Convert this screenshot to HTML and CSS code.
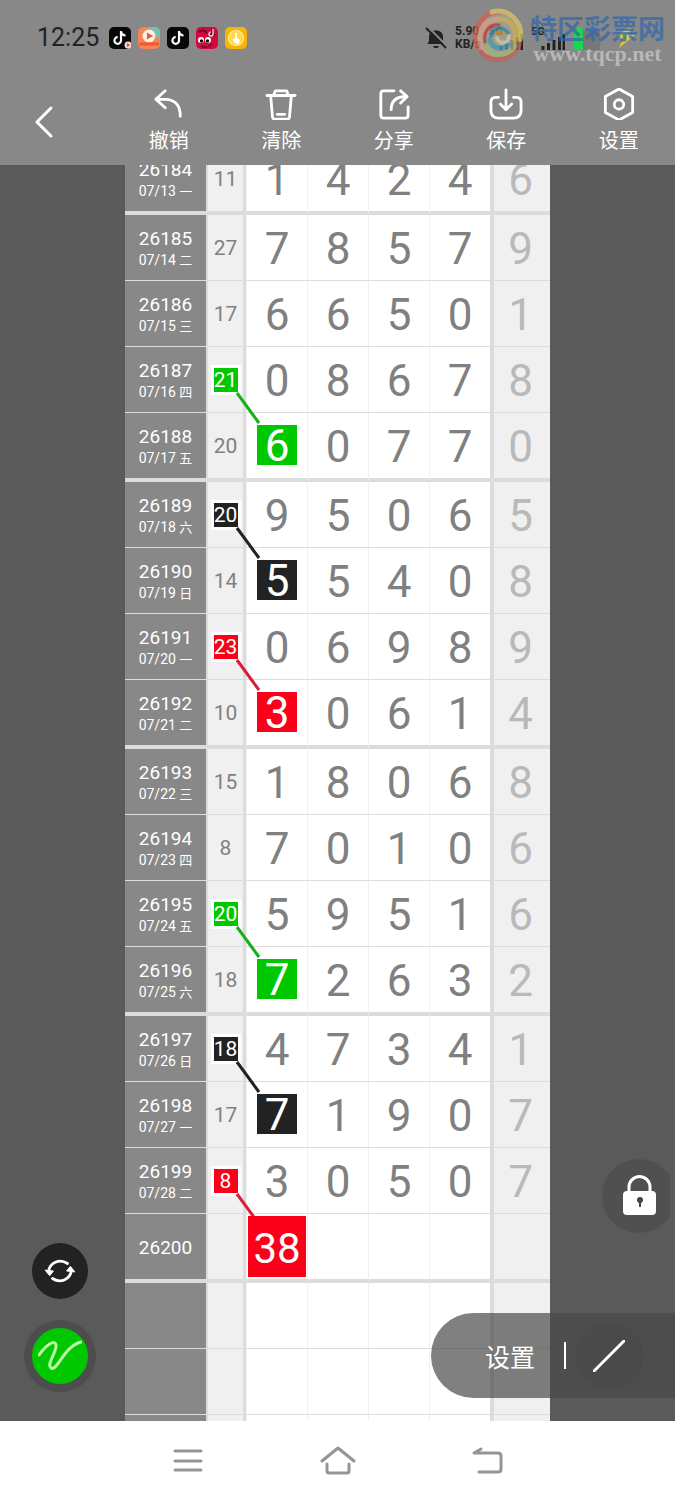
FILE: index.html
```html
<!DOCTYPE html>
<html lang="zh-CN">
<head>
    <meta charset="UTF-8">
    <meta name="viewport" content="width=device-width, initial-scale=1.0">
    <title>走势图</title>
    <link rel="stylesheet" href="styles.css">
</head>
<body>
    <header>
        <div class="status-bar">
            <span class="clock">12:25</span>
            <div class="app-icons">
                <svg viewBox="0 0 22 22"><rect width="22" height="22" rx="5" fill="#080808"/><path d="M12 4v9.500a3.300 3.300 0 1 1-3.300-3.300M12 4.500c.5 2.500 2 3.800 4.500 4" fill="none" stroke="#fff" stroke-width="2.200"/><circle cx="19" cy="18" r="3.500" fill="#f3d9cf"/><path d="M18 16l3 2-3 2z" fill="#e0442e"/></svg>
                <svg viewBox="0 0 22 22"><rect width="22" height="22" rx="5" fill="#f0865a"/><path d="M11 0h6a5 5 0 0 1 5 5v8z" fill="#6fc4ae"/><circle cx="11" cy="9" r="6.500" fill="#fbeee6"/><path d="M9 5.500l6 3.500-6 3.500z" fill="#ee5a30"/><path d="M1 17h20" stroke="#f9552b" stroke-width="3"/></svg>
                <svg viewBox="0 0 22 22"><rect width="22" height="22" rx="5" fill="#080808"/><path d="M12 4v9.500a3.300 3.300 0 1 1-3.300-3.300M12 4.500c.5 2.500 2 3.800 4.500 4" fill="none" stroke="#fff" stroke-width="2.200"/></svg>
                <svg viewBox="0 0 22 22"><rect width="22" height="22" rx="5" fill="#d3083f"/><path d="M3 5c3-2 6-2 8 1M16 2v5M13 8h6" fill="none" stroke="#5f0a24" stroke-width="2"/><path d="M17 2v5a2 2 0 1 1-2-2" fill="none" stroke="#fff" stroke-width="1.200"/><circle cx="5" cy="13" r="3" fill="#fff"/><circle cx="12" cy="13" r="3" fill="#fff"/><circle cx="5.500" cy="14" r="1.700" fill="#111"/><circle cx="11.500" cy="14" r="1.700" fill="#111"/><path d="M5 19c4 2 8 1 11-2" fill="none" stroke="#80092e" stroke-width="1.500"/></svg>
                <svg viewBox="0 0 22 22"><rect width="22" height="22" rx="5" fill="#f7b50c"/><circle cx="11" cy="11" r="7.500" fill="#ffd94a" stroke="#fff0a0" stroke-width="1.200"/><path d="M10 6v6l-2-1v3l3 3h3l1-4-3-2V6z" fill="#fff"/></svg>
            </div>
            <div class="system-icons">
                <svg class="bell" viewBox="0 0 22 22"><path d="M2 17c2-1.500 2-3 2-7 0-4 2.500-6.500 7-6.500S18 6 18 10c0 4 0 5.500 2 7z" fill="#222"/><path d="M8 19h6c-.5 3-5.500 3-6 0z" fill="#222"/><path d="M3 0l20 20" stroke="#888" stroke-width="2"/><path d="M1 1l20 20" stroke="#222" stroke-width="2"/></svg>
                <span class="speed">5.90<br>KB/s</span>
                <span class="signal">
                    <b>5G</b>
                    <svg viewBox="0 0 24 16"><path d="M2 12v4M7.500 9v7M13 6v10M18.500 3v13M23 0v16" stroke="#222" stroke-width="3"/></svg>
                </span>
                <span class="signal">
                    <b>5G</b>
                    <svg viewBox="0 0 24 16"><path d="M2 12v4M7.500 9v7M13 6v10M18.500 3v13M23 0v16" stroke="#222" stroke-width="3"/></svg>
                </span>
                <svg class="battery" viewBox="0 0 64 24"><path d="M1 4h3V1h4v3h2v20H1z" fill="#12dc4b"/><path d="M10 4h17v20H10z" fill="#777"/><path d="M54 2L43 12h7l-4 10 16-13h-8l5-7z" fill="#d8cb34"/></svg>
            </div>
            <div class="watermark">
                <svg viewBox="0 0 52 54">
                    <circle cx="26" cy="27" r="24" fill="#a7a48f"/>
                    <g fill="none" stroke-width="5" stroke-linecap="round">
                        <path d="M6 40C-2 22 10 4 27 4" stroke="#cf6552"/>
                        <path d="M14 46C2 34 8 12 26 11" stroke="#e1a38a"/>
                        <path d="M20 4C38-1 52 16 48 32" stroke="#dfc45f"/>
                        <path d="M28 11c12 0 18 12 14 22" stroke="#d6b455"/>
                        <path d="M47 36C40 54 18 56 9 44" stroke="#c56058"/>
                        <path d="M43 38C34 50 20 48 15 39" stroke="#a9bd72"/>
                        <path d="M13 34c-2-12 6-18 14-17" stroke="#c83c3a" stroke-width="3"/>
                        <path d="M36 37c-7 6-16 3-18-5" stroke="#4b9ebb"/>
                        <path d="M19 28c0-8 12-11 17-3" stroke="#3b91ad" stroke-width="4"/>
                        <path d="M37 28c0 8-10 9-12 2" stroke="#d5cfb0" stroke-width="4"/>
                        <path d="M24 27c1-5 8-4 7 1" stroke="#d79b2c" stroke-width="3"/>
                    </g>
                </svg>
                <p>
                    <strong>特区彩票网</strong>
                    <span>www.tqcp.net</span>
                </p>
            </div>
        </div>
        <nav class="toolbar">
            <button class="back" aria-label="返回"><svg viewBox="0 0 34 34"><path d="M24 3L10 17l14 14"/></svg></button>
            <button><svg viewBox="0 0 34 34"><path d="M13 3L3 12l10 9M4 12h9c10 0 16 6 16 18"/></svg>撤销</button>
            <button><svg viewBox="0 0 34 34"><path d="M2 8h30M9 8l2-5h12l2 5M6 8l2 23q.3 2 2.300 2h13.400q2 0 2.300-2l2-23M13 28h8"/></svg>清除</button>
            <button><svg viewBox="0 0 34 34"><path d="M17 3H6q-3 0-3 3v23q0 3 3 3h23q3 0 3-3v-9M14 23c0-9 5-14 16-14M24 3l7 6-7 7"/></svg>分享</button>
            <button><svg viewBox="0 0 34 34"><path d="M9 10H6q-5 0-5 5v9q0 8 8 8h16q8 0 8-8v-9q0-5-5-5h-3M17 2v20M11 17l6 6 6-6"/></svg>保存</button>
            <button><svg viewBox="0 0 34 34"><path d="M17 1l14.500 8v17L17 34 2.500 26V9z"/><circle cx="17" cy="17.500" r="5"/></svg>设置</button>
        </nav>
    </header>

    <main>
        <table class="chart">
            <colgroup>
                <col class="col-issue">
                <col class="col-sum">
                <col span="4">
                <col class="col-last">
            </colgroup>
            <tbody id="chart-body">
                <!-- Rows are added by the script -->
            </tbody>
        </table>

        <div class="tools">
            <button class="refresh-btn" aria-label="切换">
                <svg viewBox="0 0 32 26"><path d="M4 13C5 5 15-1 24 5M28 13c-1 8-11 14-20 8" fill="none" stroke="#fff" stroke-width="3" stroke-linecap="round"/><path d="M0 12l9 1-4 5zM32 14l-9-1 4-5z" fill="#fff" stroke="#fff" stroke-linejoin="round"/></svg>
            </button>
            <button class="pen-btn" aria-label="画笔">
                <svg viewBox="0 0 44 32"><path d="M1 15C8 5 17-1 18 5c1 7-10 19-5 23 6 4 13-22 30-26" fill="none" stroke="#b9f7a4" stroke-width="3" stroke-linecap="round"/></svg>
            </button>
        </div>

        <button class="lock-btn" aria-label="锁定">
            <svg viewBox="0 0 68 74"><circle cx="37" cy="37" r="37" fill="#505050"/><path d="M27 36V28a10.500 10.500 0 0 1 21 0v8" fill="none" stroke="#fff" stroke-width="3"/><rect x="21" y="32" width="33" height="24" rx="4" fill="#fff"/><circle cx="38" cy="41" r="3" fill="#444"/><path d="M38 41v7" stroke="#444" stroke-width="2"/></svg>
        </button>

        <div class="line-panel">
            <button>设置</button>
            <i></i>
            <button class="line-btn" aria-label="直线"><svg viewBox="0 0 32 32"><path d="M1 31L31 1" stroke="#fff" stroke-width="3" stroke-linecap="round"/></svg></button>
        </div>
    </main>

    <footer>
        <button aria-label="菜单"><svg viewBox="0 0 36 30"><path d="M5 5h26M5 15h26M5 24h26"/></svg></button>
        <button aria-label="主页"><svg viewBox="0 0 36 30"><path d="M2 15L18 2l16 13M7 18v7q0 2 2 2h18q2 0 2-2v-7"/></svg></button>
        <button aria-label="后退"><svg viewBox="0 0 36 30"><path d="M11 3L4 7h24q3 0 3 3v13q0 3-3 3H9"/></svg></button>
    </footer>

    <script>
        // issue, date, weekday, sum, digits, colour of the mark on the sum, colour of the mark on the first digit
        const rows = [
            ["26184", "07/13", "一", "11", "14246"],
            ["26185", "07/14", "二", "27", "78579"],
            ["26186", "07/15", "三", "17", "66501"],
            ["26187", "07/16", "四", "21", "08678", "green"],
            ["26188", "07/17", "五", "20", "60770", "", "green"],
            ["26189", "07/18", "六", "20", "95065", "black"],
            ["26190", "07/19", "日", "14", "55408", "", "black"],
            ["26191", "07/20", "一", "23", "06989", "red"],
            ["26192", "07/21", "二", "10", "30614", "", "red"],
            ["26193", "07/22", "三", "15", "18068"],
            ["26194", "07/23", "四", "8", "70106"],
            ["26195", "07/24", "五", "20", "59516", "green"],
            ["26196", "07/25", "六", "18", "72632", "", "green"],
            ["26197", "07/26", "日", "18", "47341", "black"],
            ["26198", "07/27", "一", "17", "71907", "", "black"],
            ["26199", "07/28", "二", "8", "30507", "red"],
            ["26200", "", "", "", ""],
            ["", "", "", "", ""],
            ["", "", "", "", ""],
            ["", "", "", "", ""]
        ];

        const chartBody = document.getElementById("chart-body");

        rows.forEach(([issue, date, weekday, sum, digits, sumMark, digitMark], index) => {
            const row = document.createElement("tr");
            // A thick rule closes every group of four issues
            if (index % 4 === 0) {
                row.classList.add("group-end");
            }

            let html = `<th scope="row">${issue}${date ? `<small>${date} <em>${weekday}</em></small>` : ""}</th>`;

            if (sumMark) {
                html += `<td class="sum"><span class="mark ${sumMark}">${sum}</span>
                    <svg class="link ${sumMark}" viewBox="0 0 24 32"><path d="M1 1l22 30"/></svg></td>`;
            } else {
                html += `<td class="sum">${sum}</td>`;
            }

            for (let i = 0; i < 5; i++) {
                let value = digits[i] || "";
                if (i === 0 && digitMark) {
                    value = `<span class="mark ${digitMark}">${value}</span>`;
                }
                if (i === 0 && issue === "26200") {
                    value = `<span class="mark guess red">38</span>`;
                }
                html += `<td class="${i === 4 ? "digit last" : "digit"}">${value}</td>`;
            }

            row.innerHTML = html;
            chartBody.appendChild(row);
        });
    </script>
</body>
</html>
```
FILE: styles.css
```css
* {
    box-sizing: border-box;
}

body {
    display: flex;
    flex-direction: column;
    height: 100vh;
    margin: 0;
    background: #fff;
    font-family: Roboto, "Noto Sans CJK SC", sans-serif;
}

button {
    padding: 0;
    border: none;
    background: none;
    color: #fff;
    font-family: inherit;
    cursor: pointer;
}

svg {
    display: block;
}

header {
    position: relative;
    z-index: 2;
    background: #888;
}

/* Status bar */
.status-bar {
    position: relative;
    display: flex;
    align-items: center;
    height: 75px;
    padding: 0 38px 0 37px;
    color: #222;
}

.clock {
    font-size: 25px;
}

.app-icons {
    display: flex;
    gap: 7px;
    margin-left: 10px;
}

.app-icons svg {
    width: 22px;
    height: 22px;
}

.system-icons {
    display: flex;
    align-items: center;
    gap: 8px;
    margin-left: auto;
}

.bell {
    width: 22px;
    height: 22px;
}

.speed {
    font-size: 12px;
    font-weight: 700;
    line-height: 13px;
}

.signal {
    position: relative;
    width: 34px;
    height: 24px;
}

.signal b {
    position: absolute;
    top: 0;
    left: 0;
    font-size: 11px;
    line-height: 12px;
}

.signal svg {
    width: 24px;
    height: 16px;
    margin: 8px 0 0 10px;
}

.battery {
    width: 64px;
    height: 24px;
}

/* Site mark over the status icons */
.watermark {
    position: absolute;
    top: 8px;
    right: 10px;
    display: flex;
    gap: 6px;
    opacity: 0.75;
}

.watermark svg {
    width: 52px;
    height: 54px;
}

.watermark p {
    display: flex;
    flex-direction: column;
    margin: 6px 0 0;
}

.watermark strong {
    color: #3468a8;
    font-size: 27px;
    line-height: 32px;
}

.watermark span {
    color: #c8c8c8;
    font-family: "Liberation Serif", serif;
    font-size: 22px;
    font-weight: 700;
    line-height: 16px;
    text-align: center;
}

/* Toolbar */
.toolbar {
    display: grid;
    grid-template-columns: repeat(6, 1fr);
    height: 90px;
    padding-top: 13px;
}

.toolbar button {
    display: flex;
    flex-direction: column;
    align-items: center;
    gap: 6px;
    height: 68px;
    font-size: 20px;
    line-height: 30px;
}

.toolbar svg {
    width: 34px;
    height: 34px;
    fill: none;
    stroke: #fff;
    stroke-width: 3;
    stroke-linecap: round;
    stroke-linejoin: round;
}

.toolbar .back {
    justify-content: center;
    padding-right: 24px;
}

/* Chart */
main {
    position: relative;
    flex: 1;
    min-height: 0;
    overflow: hidden;
    background: #5a5a5a;
}

.chart {
    width: 100%;
    max-width: 425px;
    margin: -19px auto 0;
    border-collapse: separate;
    border-spacing: 0;
    table-layout: fixed;
    background: #fff;
    color: #808080;
    text-align: center;
}

.col-issue {
    width: 83px;
}

.col-sum {
    width: 38px;
}

.col-last {
    width: 60px;
}

.chart th,
.chart td {
    height: 66px;
    padding: 0;
    border-bottom: 1px solid #dcdcdc;
}

.chart .group-end th,
.chart .group-end td {
    height: 69px;
    border-bottom-width: 4px;
}

.chart th {
    padding-top: 3px;
    border-right: 2px solid #dcdcdc;
    background: #888;
    color: #fff;
    font-size: 19px;
    font-weight: 400;
    line-height: 22px;
}

.chart small {
    display: block;
    font-size: 14px;
    line-height: 20px;
}

.chart em {
    font-size: 13px;
    font-style: normal;
}

.chart .sum {
    position: relative;
    border-right: 3px solid #dcdcdc;
    background: #f0f0f0;
    font-size: 21px;
}

.chart .digit {
    padding-top: 3px;
    border-left: 1px solid #f0f0f0;
    font-size: 44px;
    line-height: 44px;
}

.chart .last {
    padding-right: 3px;
    border-left: 4px solid #dcdcdc;
    background: #f0f0f0;
    color: #b9b9b9;
}

.mark {
    position: relative;
    display: block;
    width: 40px;
    height: 40px;
    margin: 0 auto;
    outline: 3px solid #fff;
    color: #fff;
    line-height: 43px;
}

.digit .mark {
    margin-bottom: 5px;
}

.sum .mark {
    width: 24px;
    height: 24px;
    line-height: 25px;
}

.digit .guess {
    z-index: 1;
    width: 58px;
    height: 61px;
    margin: -3px auto 0;
    outline: none;
    font-size: 42px;
    line-height: 65px;
}

.mark.green {
    background: #00c800;
}

.mark.black {
    background: #222;
}

.mark.red {
    background: #fa0019;
}

.link {
    position: absolute;
    top: 45px;
    left: 28px;
    z-index: 1;
    width: 24px;
    height: 32px;
    stroke-width: 3;
}

.link.green {
    stroke: #18b018;
}

.link.black {
    stroke: #222;
}

.link.red {
    stroke: #d81f35;
}

/* Floating controls */
.tools {
    position: absolute;
    bottom: 29px;
    left: 24px;
    display: flex;
    flex-direction: column;
    align-items: center;
    gap: 21px;
}

.tools button {
    display: flex;
    justify-content: center;
    align-items: center;
    border-radius: 50%;
}

.refresh-btn {
    width: 56px;
    height: 56px;
    background: #222;
}

.refresh-btn svg {
    width: 30px;
    height: 26px;
}

.pen-btn {
    width: 72px;
    height: 72px;
    border: 8px solid #4d4d4d;
    background: #00c800;
}

.pen-btn svg {
    width: 44px;
    height: 32px;
}

.lock-btn {
    position: absolute;
    right: 5px;
    bottom: 188px;
}

.lock-btn svg {
    width: 68px;
    height: 74px;
}

.line-panel {
    position: absolute;
    right: 0;
    bottom: 23px;
    display: flex;
    align-items: center;
    height: 85px;
    padding: 0 32px 0 54px;
    border-radius: 43px 0 0 43px;
    background: rgba(71, 71, 71, 0.69);
}

.line-panel button {
    font-size: 25px;
}

.line-panel i {
    width: 2px;
    height: 27px;
    margin-left: 29px;
    background: #fff;
}

.line-panel .line-btn {
    display: flex;
    justify-content: center;
    align-items: center;
    width: 68px;
    height: 68px;
    margin-left: 9px;
    border-radius: 50%;
    background: rgba(70, 70, 70, 0.3);
}

.line-btn svg {
    width: 32px;
    height: 32px;
}

/* System navigation */
footer {
    display: flex;
    justify-content: center;
    align-items: center;
    gap: 114px;
    height: 79px;
    background: #fff;
}

footer svg {
    width: 36px;
    height: 30px;
    fill: none;
    stroke: #959595;
    stroke-width: 3;
    stroke-linecap: round;
    stroke-linejoin: round;
}
```
